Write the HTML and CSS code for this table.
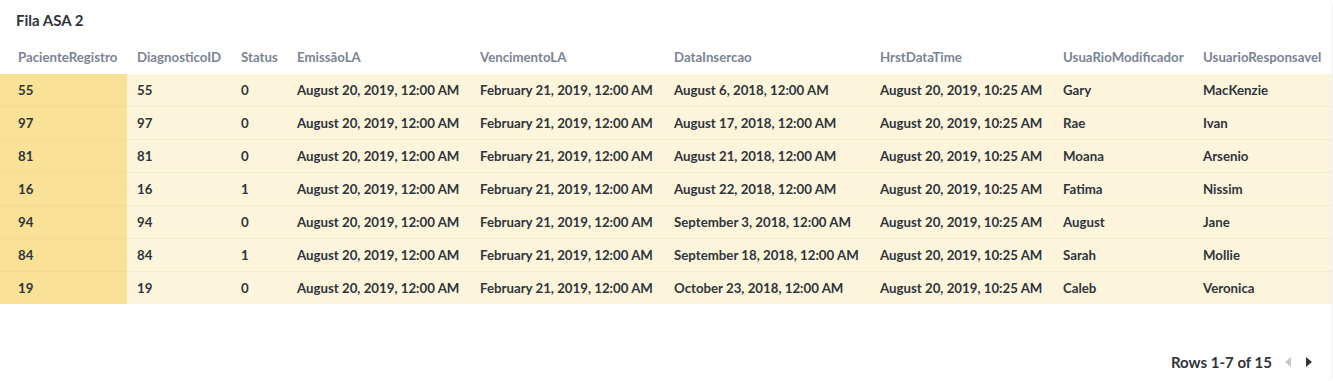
FILE: index.html
```html
<!DOCTYPE html>
<html>
<head>
<meta charset="utf-8">
<link rel="stylesheet" href="styles.css">
</head>
<body>
<div class="card">
  <div class="title">Fila ASA 2</div>
  <div class="table-wrap">
    <table class="grid">
      <colgroup>
        <col class="c1"><col class="c2"><col class="c3"><col class="c4"><col class="c5"><col class="c6"><col class="c7"><col class="c8"><col class="c9">
      </colgroup>
      <thead>
        <tr>
          <th class="first">PacienteRegistro</th>
          <th>DiagnosticoID</th>
          <th>Status</th>
          <th>EmissãoLA</th>
          <th>VencimentoLA</th>
          <th>DataInsercao</th>
          <th>HrstDataTime</th>
          <th>UsuaRioModificador</th>
          <th>UsuarioResponsavel</th>
        </tr>
      </thead>
      <tbody>
        <tr><td class="first">55</td><td>55</td><td>0</td><td>August 20, 2019, 12:00 AM</td><td>February 21, 2019, 12:00 AM</td><td>August 6, 2018, 12:00 AM</td><td>August 20, 2019, 10:25 AM</td><td>Gary</td><td>MacKenzie</td></tr>
        <tr><td class="first">97</td><td>97</td><td>0</td><td>August 20, 2019, 12:00 AM</td><td>February 21, 2019, 12:00 AM</td><td>August 17, 2018, 12:00 AM</td><td>August 20, 2019, 10:25 AM</td><td>Rae</td><td>Ivan</td></tr>
        <tr><td class="first">81</td><td>81</td><td>0</td><td>August 20, 2019, 12:00 AM</td><td>February 21, 2019, 12:00 AM</td><td>August 21, 2018, 12:00 AM</td><td>August 20, 2019, 10:25 AM</td><td>Moana</td><td>Arsenio</td></tr>
        <tr><td class="first">16</td><td>16</td><td>1</td><td>August 20, 2019, 12:00 AM</td><td>February 21, 2019, 12:00 AM</td><td>August 22, 2018, 12:00 AM</td><td>August 20, 2019, 10:25 AM</td><td>Fatima</td><td>Nissim</td></tr>
        <tr><td class="first">94</td><td>94</td><td>0</td><td>August 20, 2019, 12:00 AM</td><td>February 21, 2019, 12:00 AM</td><td>September 3, 2018, 12:00 AM</td><td>August 20, 2019, 10:25 AM</td><td>August</td><td>Jane</td></tr>
        <tr><td class="first">84</td><td>84</td><td>1</td><td>August 20, 2019, 12:00 AM</td><td>February 21, 2019, 12:00 AM</td><td>September 18, 2018, 12:00 AM</td><td>August 20, 2019, 10:25 AM</td><td>Sarah</td><td>Mollie</td></tr>
        <tr><td class="first">19</td><td>19</td><td>0</td><td>August 20, 2019, 12:00 AM</td><td>February 21, 2019, 12:00 AM</td><td>October 23, 2018, 12:00 AM</td><td>August 20, 2019, 10:25 AM</td><td>Caleb</td><td>Veronica</td></tr>
      </tbody>
    </table>
  </div>
  <div class="footer">
    <span class="rows">Rows 1-7 of 15</span>
    <svg class="arrow disabled" width="6" height="10" viewBox="0 0 6 10"><path d="M6 0 L0 5 L6 10 Z"/></svg>
    <svg class="arrow" width="6" height="10" viewBox="0 0 6 10"><path d="M0 0 L6 5 L0 10 Z"/></svg>
  </div>
</div>
</body>
</html>
```
FILE: styles.css
```css
html, body {
  margin: 0;
  padding: 0;
  background: #ffffff;
}
body {
  font-family: Lato, "Open Sans", sans-serif;
  color: #2e353b;
  -webkit-font-smoothing: antialiased;
}
.card {
  width: 1333px;
  height: 381px;
  box-sizing: border-box;
  border-right: 1px solid #eef0f2;
  border-radius: 0 6px 6px 0;
  display: flex;
  flex-direction: column;
}
.title {
  font-size: 15px;
  font-weight: 700;
  padding: 10px 16px 0 16px;
  height: 30px;
  line-height: 20px;
  box-sizing: content-box;
}
.table-wrap {
  flex: 0 0 auto;
}
.grid {
  border-collapse: collapse;
  table-layout: fixed;
  width: 1332px;
}
.c1 { width: 127px; }
.c2 { width: 104px; }
.c3 { width: 56px; }
.c4 { width: 183px; }
.c5 { width: 194px; }
.c6 { width: 206px; }
.c7 { width: 183px; }
.c8 { width: 140px; }
.c9 { width: 139px; }
.grid th {
  text-align: left;
  font-size: 13.25px;
  font-weight: 700;
  color: #7a8493;
  height: 34px;
  padding: 0 0 0 10px;
  white-space: nowrap;
  overflow: hidden;
}
.grid td {
  font-size: 13.25px;
  font-weight: 700;
  color: #2e353b;
  height: 32px;
  padding: 0 0 0 10px;
  background: #fdf4dc;
  border-bottom: 1px solid #f4ead0;
  white-space: nowrap;
  overflow: hidden;
}
.grid th.first, .grid td.first {
  padding-left: 18px;
}
.grid td.first {
  background: #f9e196;
  border-bottom-color: #f3da90;
}
.grid tbody tr:last-child td {
  border-bottom: none;
}
.footer {
  margin-top: auto;
  display: flex;
  align-items: center;
  justify-content: flex-end;
  padding: 0 20px 7px 0;
  height: 24px;
}
.rows {
  font-size: 15px;
  font-weight: 700;
  color: #2e353b;
  margin-right: 13px;
}
.arrow {
  fill: #2e353b;
  margin-left: 15px;
}
.arrow.disabled {
  fill: #c4c8cc;
  margin-left: 0;
}
```
